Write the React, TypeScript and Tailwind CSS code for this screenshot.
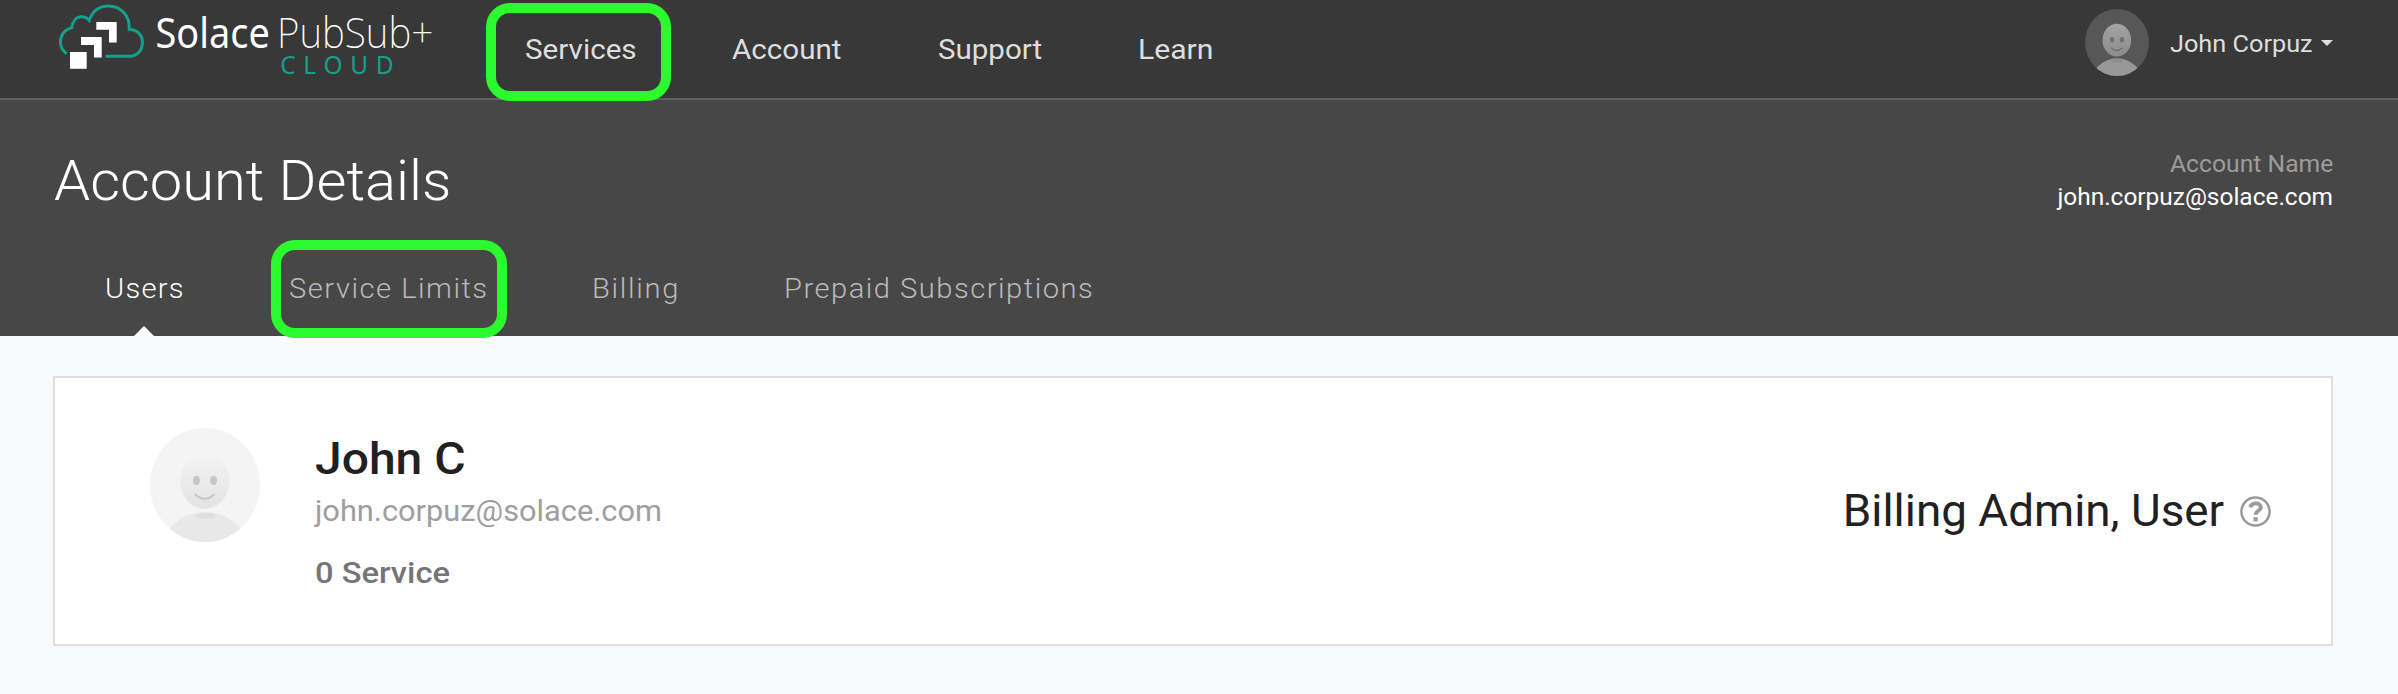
import React from "react";

type AvatarTheme = { id: string; bg: string; top: string; bottom: string; body: string; neck: string; face: string };

const darkTheme: AvatarTheme = { id: "dark", bg: "#575757", top: "#a3a3a3", bottom: "#8c8c8c", body: "#989898", neck: "#8b8b8b", face: "#6f6f6f" };
const lightTheme: AvatarTheme = { id: "light", bg: "#f4f4f4", top: "#f4f4f4", bottom: "#e2e2e2", body: "#e8e8e8", neck: "#dfdfdf", face: "#c6c6c6" };

function Avatar({ theme, className }: { theme: AvatarTheme; className: string }) {
  return (
    <svg viewBox="0 0 110 114" preserveAspectRatio="none" className={className}>
      <defs>
        <clipPath id={`clip-${theme.id}`}>
          <ellipse cx="55" cy="57" rx="55" ry="57" />
        </clipPath>
        <linearGradient id={`head-${theme.id}`} x1="0" y1="0" x2="0" y2="1">
          <stop offset="0" stopColor={theme.top} />
          <stop offset="1" stopColor={theme.bottom} />
        </linearGradient>
      </defs>
      <g clipPath={`url(#clip-${theme.id})`}>
        <rect width="110" height="114" fill={theme.bg} />
        <ellipse cx="55" cy="130" rx="46" ry="46" fill={theme.body} />
        <ellipse cx="55.5" cy="88" rx="10.5" ry="3" fill={theme.neck} />
        <ellipse cx="54.7" cy="53" rx="24.5" ry="28" fill={`url(#head-${theme.id})`} />
        <ellipse cx="46.5" cy="52.4" rx="3.5" ry="4.7" fill={theme.face} />
        <ellipse cx="63.5" cy="52.4" rx="3.5" ry="4.7" fill={theme.face} />
        <path d="M45.4 66.4Q54.8 75 64 66.4" fill="none" stroke={theme.face} strokeWidth="2" strokeLinecap="round" />
      </g>
    </svg>
  );
}

function Logo() {
  return (
    <svg viewBox="0 0 440 98" className="h-[98px] w-[440px] shrink-0">
      <path
        d="M66.7 53.8C62.2 50.6 60.4 46.4 60.4 41.8C60.4 34.8 65 29.4 71.8 27.6C72.6 20.8 76.6 16.8 81.6 16.8C84.8 16.8 87.4 18.2 89.2 20.4C92.6 11 99.6 6 108.4 6C121 6 130 15.8 129.2 29.4C137.2 29.4 142.4 35 142.4 42.2C142.4 50.4 137.4 56.3 129.4 56.3H105.5"
        fill="none"
        stroke="#14a08a"
        strokeWidth="3"
      />
      <g fill="#fff">
        <path d="M96.3 22H116.7V42.5H109V29.7H96.3Z" />
        <path d="M81 37H101.7V57.5H94V45H81Z" />
        <path d="M70 52H86.7V68.8H70Z" />
      </g>
      <g className="font-['Noto_Sans',sans-serif]" fill="#fff" fontSize="42">
        <text transform="translate(155.5 48) scale(0.902 1)" fontWeight="400">Solace</text>
        <text transform="translate(277 48) scale(0.922 1)" fontWeight="200">PubSub+</text>
        <text x="280.2" y="74.2" fontSize="24.5" fontWeight="400" letterSpacing="7.7" fill="#14a08a">CLOUD</text>
      </g>
    </svg>
  );
}

function Highlight({ className }: { className: string }) {
  return <span className={`absolute border-[10px] border-[#2bfa2f] ${className}`} />;
}

function Wide({ className, children }: { className: string; children: React.ReactNode }) {
  return <span className={`inline-block ${className}`}>{children}</span>;
}

function HelpIcon() {
  return (
    <svg viewBox="0 0 31 31" className="h-[31px] w-[31px]" fill="none" stroke="#9b9b9b">
      <circle cx="15.5" cy="15.5" r="14.1" strokeWidth="2.5" />
      <path d="M10.1 11.2C11.3 8.5 13 7.4 15.6 7.4C18.6 7.4 20.8 9 20.8 11.4C20.8 14.8 15.7 14.8 15.7 18.8" strokeWidth="3.9" />
      <path d="M13.5 23.3H17.8" strokeWidth="4.2" />
    </svg>
  );
}

export default function App() {
  return (
    <div className="min-h-[694px] w-full bg-[#f8f9fb] font-[Roboto,sans-serif] whitespace-nowrap">
      <header className="flex h-[100px] justify-between border-b-2 border-[#616161] bg-[#383838]">
        <div className="flex">
          <Logo />
          <nav className="flex items-center pt-[2px] pl-[84.7px] text-[27.5px] text-[#dedede]">
            <a className="relative w-[207.3px]">
              <Wide className="origin-left scale-x-[1.077]">Services</Wide>
              <Highlight className="-top-[26px] -left-[38.7px] h-[98px] w-[185px] rounded-[24px]" />
            </a>
            <a className="w-[206px]">
              <Wide className="origin-left scale-x-[1.076]">Account</Wide>
            </a>
            <a className="w-[200px]">
              <Wide className="origin-left scale-x-[1.073]">Support</Wide>
            </a>
            <a>
              <Wide className="origin-left scale-x-[1.096]">Learn</Wide>
            </a>
          </nav>
        </div>
        <div className="flex h-[88px] items-center pr-[65px]">
          <Avatar theme={darkTheme} className="-mt-[3px] h-[67px] w-[64px]" />
          <span className="ml-[21px] w-[151.5px] pt-[2px] text-[23.5px] text-[#dedede]">
            <Wide className="origin-left scale-x-[1.076]">John Corpuz</Wide>
          </span>
          <svg viewBox="0 0 12 6" className="-mt-[2px] h-[6px] w-[12px]">
            <path d="M0 0H12L6 6Z" fill="#dedede" />
          </svg>
        </div>
      </header>

      <section className="h-[236px] bg-[#474747]">
        <div className="flex h-[160px] items-center justify-between pt-[2px] pr-[65px] pl-[54px]">
          <h1 className="text-[55px] font-light text-white">
            <Wide className="origin-left scale-x-[1.052]">Account Details</Wide>
          </h1>
          <div className="text-right text-[23.5px] leading-[33px]">
            <div className="text-[#9c9c9c]">
              <Wide className="origin-right scale-x-[1.052]">Account Name</Wide>
            </div>
            <div className="text-white">
              <Wide className="origin-right scale-x-[1.04]">john.corpuz@solace.com</Wide>
            </div>
          </div>
        </div>
        <div className="flex h-[76px] pl-[105px] text-[27.5px] leading-[57px] font-light text-[#bababa]">
          <a className="relative w-[184px] text-white">
            <Wide className="origin-left scale-x-[1.06] tracking-[1.18px]">Users</Wide>
            <svg viewBox="0 0 20 10" className="absolute bottom-0 left-[29px] h-[10px] w-[20px]">
              <path d="M0 10L10 0L20 10Z" fill="#fff" />
            </svg>
          </a>
          <a className="relative w-[302.6px]">
            <Wide className="origin-left scale-x-[1.06] tracking-[1.41px]">Service Limits</Wide>
            <Highlight className="-top-[20px] -left-[18px] h-[98px] w-[236px] rounded-[24px]" />
          </a>
          <a className="w-[192px]">
            <Wide className="origin-left scale-x-[1.06] tracking-[1.6px]">Billing</Wide>
          </a>
          <a>
            <Wide className="origin-left scale-x-[1.06] tracking-[1.4px]">Prepaid Subscriptions</Wide>
          </a>
        </div>
      </section>

      <main className="pt-[40px] pr-[65px] pl-[53px]">
        <article className="flex h-[270px] justify-between border-2 border-[#dedede] bg-white">
          <div className="flex">
            <Avatar theme={lightTheme} className="mt-[50px] ml-[94.5px] h-[114px] w-[110px]" />
            <div className="pt-[52px] pl-[55px]">
              <h2 className="h-[59px] text-[43.5px] leading-[60px] font-medium text-[#212121]">
                <Wide className="origin-left scale-x-[1.104]">John C</Wide>
              </h2>
              <p className="h-[45px] text-[29.5px] leading-[44px] text-[#9e9e9e]">
                <Wide className="origin-left scale-x-[1.043]">john.corpuz@solace.com</Wide>
              </p>
              <p className="text-[29.5px] leading-[79px] font-medium text-[#757575]">
                <Wide className="origin-left scale-x-[1.108]">0 Service</Wide>
              </p>
            </div>
          </div>
          <div className="flex items-center pr-[60px]">
            <span className="mr-[16px] pt-[2px] text-[43.5px] leading-[60px] text-[#212121]">
              <Wide className="origin-right scale-x-[1.053]">Billing Admin, User</Wide>
            </span>
            <HelpIcon />
          </div>
        </article>
      </main>
    </div>
  );
}
